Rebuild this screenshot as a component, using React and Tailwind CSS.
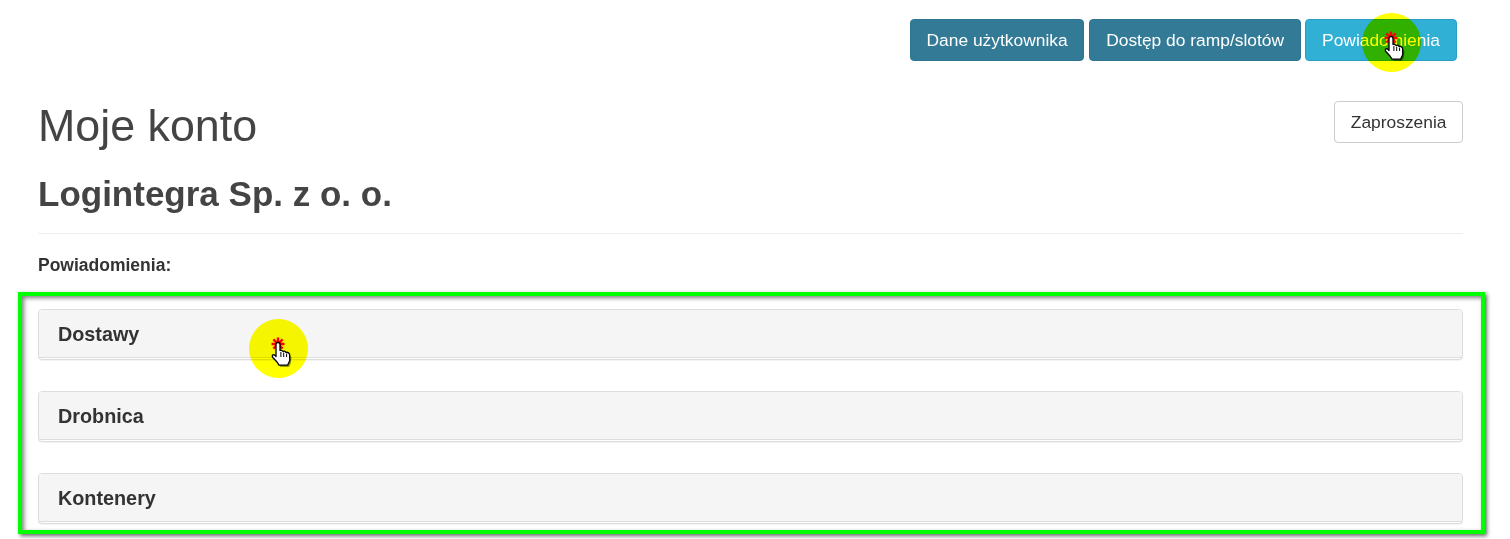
import React from "react";

const panels = ["Dostawy", "Drobnica", "Kontenery"];

function ClickMarker({ className }) {
  return (
    <div className={`absolute h-[59px] w-[59px] ${className}`}>
      <div className="absolute inset-0 rounded-full bg-[#ffff00] mix-blend-multiply"></div>
      <svg className="absolute left-[19px] top-[15px]" width="30" height="36" viewBox="0 0 30 36">
        <path
          d="M6 21 L8.5 23 V11 Q10 8.5 11.5 11 V17 L20 19 L22 21 L21.5 27 L19.5 31 H11 L9 28 L5 23 Z"
          fill="#000"
          opacity="0.4"
          transform="translate(1.5 2)"
        />
        <path
          d="M10 3.5 V16.5 M3.5 10 H16.5 M5.4 5.4 L14.6 14.6 M14.6 5.4 L5.4 14.6"
          stroke="#ff0000"
          strokeWidth="2.4"
          fill="none"
        />
        <path
          d="M8 22.5 V10.5 Q8 8.5 10 8.5 Q12 8.5 12 10.5 V16.5 Q14.3 15.8 15 17.4 Q17.3 16.6 18 18.4 Q20.6 17.6 21.6 20.3 L21.8 26.5 L19.6 31.2 H11 L9 28 L4.6 23.3 Q3.6 20.6 6 20.6 Z"
          fill="#fff"
          stroke="#000"
          strokeWidth="1.3"
          strokeLinejoin="round"
        />
        <path d="M12.9 18 V23 M15.7 18.5 V23 M18.6 19.5 V23" stroke="#000" strokeWidth="1" fill="none" />
      </svg>
    </div>
  );
}

function Panel({ title }) {
  return (
    <div className="h-[51px] rounded border border-[#ddd] bg-white shadow-[0_1px_1px_rgba(0,0,0,0.05)]">
      <div className="h-[48px] rounded-t-[3px] border-b border-[#ddd] bg-[#f5f5f5] px-[19px] pt-[12px] text-[19.8px] leading-[24px] font-bold text-[#333]">
        {title}
      </div>
    </div>
  );
}

function App() {
  return (
    <div className="relative h-[539px] w-[1510px] overflow-hidden bg-white font-['Liberation_Sans',Arial,sans-serif] text-[#333]">
      <div className="flex justify-end pr-[53px] pt-[19px]">
        <button className="h-[42px] rounded border border-[#2e7591] bg-[#337a96] px-[15.5px] text-[17.4px] text-white">
          Dane użytkownika
        </button>
        <button className="ml-[5px] h-[42px] rounded border border-[#2e7591] bg-[#337a96] px-[16px] text-[17.4px] text-white">
          Dostęp do ramp/slotów
        </button>
        <button className="ml-[4px] h-[42px] rounded border border-[#2a9fc4] bg-[#31b0d5] px-[16px] text-[17.4px] text-white">
          Powiadomienia
        </button>
      </div>

      <div className="pl-[38px] pr-[47px]">
        <div className="mt-[40px] flex items-start justify-between">
          <h1 className="mt-[-1px] text-[44.8px] leading-[50px] text-[#444]">Moje konto</h1>
          <button className="h-[42px] rounded border border-[#ccc] bg-white px-[15.5px] text-[17.4px] text-[#333]">
            Zaproszenia
          </button>
        </div>
        <h2 className="mt-[25px] text-[35px] leading-[38px] font-bold text-[#444]">Logintegra Sp. z o. o.</h2>
        <hr className="mt-[20px] border-[#eee]" />
        <p className="mt-[21px] text-[17.5px] leading-[20px] font-bold text-[#333]">Powiadomienia:</p>
      </div>

      <div className="mt-[17px] ml-[18px] h-[242px] w-[1467px] border-4 border-[#00ff00] pl-[16px] pr-[18px] pt-[13px] shadow-[2px_2px_4px_rgba(0,0,0,0.6),inset_2px_2px_4px_rgba(0,0,0,0.5)]">
        <div className="flex flex-col gap-[31px]">
          {panels.map((title) => (
            <Panel key={title} title={title} />
          ))}
        </div>
      </div>

      <ClickMarker className="left-[1362px] top-[13px]" />
      <ClickMarker className="left-[249px] top-[319px]" />
    </div>
  );
}

export default App;
